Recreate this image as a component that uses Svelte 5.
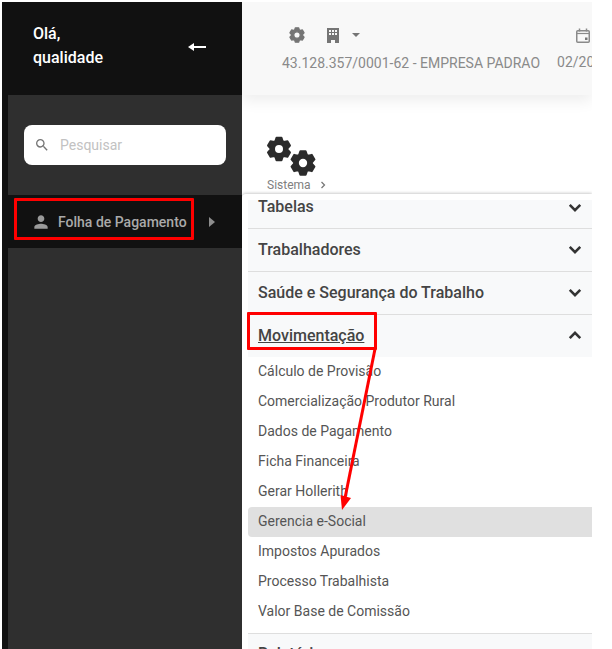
<script>
  const sections = ['Tabelas', 'Trabalhadores', 'Saúde e Segurança do Trabalho'];
  const items = ['Cálculo de Provisão', 'Comercialização Produtor Rural', 'Dados de Pagamento', 'Ficha Financeira', 'Gerar Hollerith', 'Gerencia e-Social', 'Impostos Apurados', 'Processo Trabalhista', 'Valor Base de Comissão'];

  function gearPath(R, r, hole) {
    const pts = [];
    for (let k = 0; k < 6; k++) {
      const a = (-90 + k * 60) * Math.PI / 180;
      for (const [rad, d] of [[r, -0.44], [R, -0.22], [R, 0.22], [r, 0.44]]) {
        pts.push(`${(rad * Math.cos(a + d)).toFixed(2)} ${(rad * Math.sin(a + d)).toFixed(2)}`);
      }
    }
    return `M${pts.join('L')}Z M${hole} 0A${hole} ${hole} 0 1 0 ${-hole} 0A${hole} ${hole} 0 1 0 ${hole} 0Z`;
  }
  const gear = gearPath(11.5, 8.6, 5);
</script>

<div class="page">
  <aside class="sidebar">
    <div class="brand">
      <div class="hello">Olá,<br />qualidade</div>
      <svg class="back" viewBox="0 0 18 10" width="18" height="10"><path d="M0 5 L6 1 V4 H18 V6 H6 V9 Z" fill="#fff" /></svg>
    </div>
    <div class="side-body">
      <div class="search-zone">
        <div class="search">
          <svg viewBox="0 0 24 24" width="16" height="16"><path fill="#757575" d="M15.5 14h-.79l-.28-.27A6.47 6.47 0 0 0 16 9.5 6.5 6.5 0 1 0 9.500 16c1.610 0 3.090-.59 4.230-1.570l.27.28v.79l5 4.990L20.490 19l-4.990-5zm-6 0C7.010 14 5 11.990 5 9.500S7.010 5 9.500 5 14 7.010 14 9.500 11.990 14 9.500 14z" /></svg>
          <span>Pesquisar</span>
        </div>
      </div>
      <div class="module">
        <svg viewBox="0 0 24 24" width="20" height="20"><path fill="#9a9a9a" d="M12 12c2.200 0 4-1.800 4-4s-1.800-4-4-4-4 1.800-4 4 1.800 4 4 4zm0 2c-2.700 0-8 1.300-8 4v2h16v-2c0-2.700-5.300-4-8-4z" /></svg>
        <span class="module-name">Folha de Pagamento</span>
        <i class="caret"></i>
      </div>
    </div>
  </aside>

  <main class="main">
    <header class="topbar">
      <div class="company">
        <div class="tools">
          <svg viewBox="-14 -14 28 28" width="18" height="18"><path class="gear" d={gear} style="--c:#757575" /></svg>
          <svg class="building" viewBox="0 0 12 15" width="12" height="15"><path fill="#757575" fill-rule="evenodd" d="M0 0H12V15H8V12H4V15H0Z M2 2V4H4V2Z M5 2V4H7V2Z M8 2V4H10V2Z M2 5V7H4V5Z M5 5V7H7V5Z M8 5V7H10V5Z" /></svg>
          <i class="drop"></i>
        </div>
        <div class="cnpj">43.128.357/0001-62 - EMPRESA PADRAO</div>
      </div>
      <div class="period">
        <svg class="cal" viewBox="0 0 14 15" width="14" height="15">
          <rect x="0.750" y="2.750" width="12.500" height="11.500" rx="1" fill="none" stroke="#8a8a8a" stroke-width="1.500" />
          <path d="M1 5.500H13" stroke="#8a8a8a" stroke-width="1.200" />
          <path d="M3.500 0.500V3.500M10.500 0.500V3.500" stroke="#8a8a8a" stroke-width="1.500" />
          <rect x="9" y="9.500" width="2.500" height="2.500" fill="#757575" />
        </svg>
        <div class="cnpj">02/2023</div>
      </div>
    </header>

    <div class="crumbs">
      <svg class="gears" viewBox="0 0 50 42" width="50" height="42">
        <g transform="translate(13 13)"><path class="gear" d={gear} style="--c:#2b2b2b" /></g>
        <g transform="translate(37 27) scale(1.040)"><path class="gear" d={gear} style="--c:#2b2b2b" /></g>
      </svg>
      <div class="crumb"><span>Sistema</span><svg viewBox="0 0 8 10" width="6" height="8"><path d="M2 1 L6 5 L2 9" fill="none" stroke="#777" stroke-width="1.700" /></svg></div>
    </div>

    <section class="menu">
      {#each sections as s, i}
        <div class="section" class:first={i === 0}>
          <span>{s}</span>
          <svg viewBox="0 0 16 10" width="14" height="9"><path d="M2 2 L8 8 L14 2" fill="none" stroke="#333" stroke-width="3" /></svg>
        </div>
      {/each}
      <div class="section open">
        <span>Movimentação</span>
        <svg viewBox="0 0 16 10" width="14" height="9"><path d="M2 8 L8 2 L14 8" fill="none" stroke="#333" stroke-width="3" /></svg>
      </div>
      <ul class="items">
        {#each items as item}
          <li class:active={item === 'Gerencia e-Social'}>{item}</li>
        {/each}
      </ul>
      <div class="section last"><span>Relatórios</span></div>
    </section>
  </main>

  <i class="box box-a"></i>
  <i class="box box-b"></i>
  <svg class="arrow" width="612" height="649" viewBox="0 0 612 649">
    <path d="M375 349 L345 498" stroke="#f00" stroke-width="3" fill="none" />
    <path d="M340.500 495 L351 498 L342 510 Z" fill="#f00" />
  </svg>
</div>

<style>
  :global(body) { margin: 0; background: #fff; }
  .page {
    position: relative;
    width: 612px;
    height: 649px;
    box-sizing: border-box;
    padding: 2px 20px 0 2px;
    display: flex;
    overflow: hidden;
    font-family: Roboto, "Liberation Sans", sans-serif;
    background: #fff;
  }
  .sidebar {
    width: 240px;
    flex: none;
    display: flex;
    flex-direction: column;
    background: #111;
  }
  .brand {
    height: 93px;
    flex: none;
    box-sizing: border-box;
    padding: 20px 36px 0 31px;
    display: flex;
    justify-content: space-between;
    align-items: flex-start;
    color: #fff;
  }
  .hello { font-size: 16px; line-height: 24px; font-weight: 500; }
  .back { margin-top: 20px; }
  .side-body {
    flex: 1;
    margin-left: 6px;
    background: #2f2f2f;
  }
  .search-zone { height: 100px; box-sizing: border-box; padding: 30px 16px 0; }
  .search {
    height: 40px;
    background: #fff;
    border-radius: 8px;
    display: flex;
    align-items: center;
    gap: 10px;
    padding-left: 10px;
    font-size: 14px;
    color: #c2c2c2;
  }
  .module {
    height: 53px;
    margin-left: -6px;
    background: #111;
    display: flex;
    align-items: center;
    padding-left: 29px;
    color: #aaa;
    font-size: 14px;
    font-weight: 500;
  }
  .module-name { margin-left: 7px; }
  .caret {
    margin-left: 22px;
    border-left: 6px solid #8d8d8d;
    border-top: 5px solid transparent;
    border-bottom: 5px solid transparent;
  }
  .main { flex: 1; min-width: 0; display: flex; flex-direction: column; overflow: hidden; }
  .topbar {
    height: 93px;
    flex: none;
    background: #f8f8f8;
    box-shadow: 0 6px 14px rgba(0, 0, 0, 0.07);
    display: flex;
    padding-left: 40px;
    box-sizing: border-box;
    gap: 17px;
    white-space: nowrap;
  }
  .company { padding-top: 24px; }
  .period { padding-top: 26px; display: flex; flex-direction: column; align-items: center; }
  .tools { display: flex; align-items: center; height: 18px; padding-left: 6px; }
  .building { margin-left: 21px; }
  .drop {
    margin-left: 13px;
    border-top: 4px solid #757575;
    border-left: 4px solid transparent;
    border-right: 4px solid transparent;
  }
  .cal { display: block; margin-right: 2px; }
  .cnpj { margin-top: 11px; font-size: 14px; line-height: 16px; color: #8a8a8a; }
  .gear {
    fill: var(--c);
    fill-rule: evenodd;
    stroke: var(--c);
    stroke-width: 2;
    stroke-linejoin: round;
  }
  .crumbs { height: 99px; flex: none; box-sizing: border-box; padding: 41px 0 0 24px; }
  .gears { display: block; }
  .crumb { display: flex; align-items: center; gap: 9px; padding-left: 1px; font-size: 12px; line-height: 14px; color: #808080; }
  .menu {
    flex: 1;
    min-height: 0;
    background: #fff;
    border-radius: 4px 0 0 0;
    padding: 6px 0 0 6px;
    box-shadow: 0 -1px 3px rgba(0, 0, 0, 0.2);
    overflow: hidden;
  }
  .section {
    height: 43px;
    box-sizing: border-box;
    background: #f8f9fa;
    border-bottom: 1px solid #dedede;
    display: flex;
    align-items: center;
    justify-content: space-between;
    padding: 0 10px 2px;
    font-size: 16px;
    font-weight: 500;
    color: #444;
  }
  .section.first { height: 29px; align-items: flex-start; padding-top: 0; }
  .section.first span { line-height: 14px; }
  .section.first svg { margin-top: 3px; }
  .section.open { border-bottom: 0; height: 42px; }
  .section.open span { text-decoration: underline; }
  .section.last { align-items: flex-start; padding-top: 10px; height: 60px; }
  .items { list-style: none; margin: 0; padding: 0 0 6px; border-bottom: 1px solid #dedede; }
  .items li {
    height: 30px;
    line-height: 28px;
    padding-left: 10px;
    font-size: 14px;
    color: #555;
  }
  .items li.active { background: #e0e0e0; border-radius: 4px 0 0 4px; }
  .box { position: absolute; border: 3px solid #f00; box-sizing: border-box; border-radius: 1px; }
  .box-a { left: 14px; top: 198px; width: 180px; height: 42px; }
  .box-b { left: 247px; top: 312px; width: 130px; height: 38px; }
  .arrow { position: absolute; left: 0; top: 0; pointer-events: none; }
</style>
